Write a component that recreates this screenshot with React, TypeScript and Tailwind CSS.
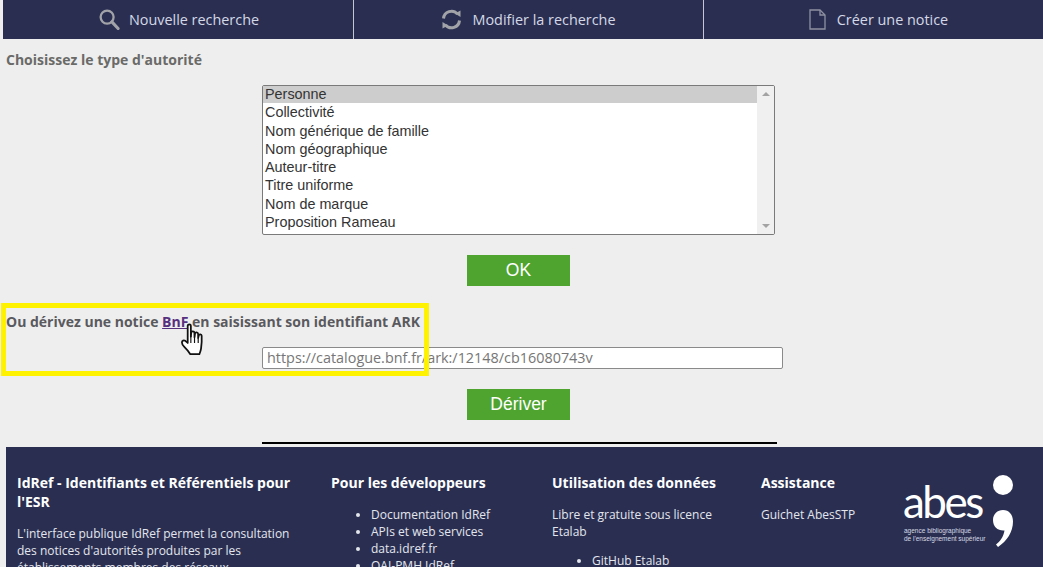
const types = [
  'Personne',
  'Collectivité',
  'Nom générique de famille',
  'Nom géographique',
  'Auteur-titre',
  'Titre uniforme',
  'Nom de marque',
  'Proposition Rameau',
];

function SearchIcon() {
  return (
    <svg width="21" height="21" viewBox="0 0 22 22" fill="none" stroke="#a2a3a8">
      <circle cx="8.500" cy="8.500" r="6.800" strokeWidth="2.400" />
      <path d="M13.500 13.500L20 20.500" strokeWidth="3.200" strokeLinecap="round" />
    </svg>
  );
}

function RefreshIcon() {
  return (
    <svg width="21" height="21" viewBox="0 0 21 21" fill="none" stroke="#a2a3a8" strokeWidth="3">
      <path d="M2.500 9.500A8 8 0 0 1 16.500 5" />
      <path d="M18.500 11.500A8 8 0 0 1 4.500 16" />
      <path d="M14 4.500L19.500 1.500L19.500 8Z" fill="#a2a3a8" stroke="none" />
      <path d="M7 16.500L1.500 19.500L1.500 13Z" fill="#a2a3a8" stroke="none" />
    </svg>
  );
}

function FileIcon() {
  return (
    <svg width="17" height="21" viewBox="0 0 17 21" fill="none" stroke="#8f91a0" strokeWidth="1.300">
      <path d="M1 1h10l5 5v14H1z" />
      <path d="M11 1v5h5" />
    </svg>
  );
}

function HandCursor() {
  return (
    <svg width="28" height="42" viewBox="0 0 26 40" className="absolute left-[180px] top-[323px]">
      <path
        d="M7 2.500c0-1.600 3-1.600 3 0V13l.4-4c.2-1.500 2.900-1.400 3 .2l.1 4.300.5-3.600c.2-1.500 2.800-1.300 2.900.3l.1 4 .6-2.600c.4-1.300 2.600-1 2.700.5.2 4-.1 9-.6 12.400-.4 2.500-1 3.700-1.600 5.200H9.500C8.500 28 6.500 25.500 4 23c-1.500-1.500-2.500-3-2.500-4.500 0-1.700 1.800-2.500 3.200-1.500L7 19V2.500z"
        fill="#fff"
        stroke="#111"
        strokeWidth="1.700"
        strokeLinejoin="round"
      />
      <path d="M10 12v7M13.500 13v6M17 14v5" stroke="#111" strokeWidth="1.100" fill="none" />
    </svg>
  );
}

function Logo() {
  return (
    <div className="relative w-[115px] h-[78px] text-white">
      <span className="absolute left-0 top-[-2px] text-[44px] leading-[60px] tracking-[-2.500px] font-['Lato',sans-serif]">
        abes
      </span>
      <div className="absolute left-[1px] top-[54px] text-[6.500px] leading-[8px] font-['Liberation_Sans',sans-serif] text-[#d8dae4]">
        agence bibliographique
        <br />
        de l'enseignement supérieur
      </div>
      <svg width="24" height="76" viewBox="0 0 24 76" className="absolute left-[88px] top-[1px]" fill="#fff">
        <circle cx="12" cy="11" r="10" />
        <path d="M2 46c0-6 4.500-10 10-10 6 0 10 4.500 10 11.500C22 58 16 67 7 73l-2-2.500c4-3 7.500-7.500 8.500-14C7 57 2 53 2 46z" />
      </svg>
    </div>
  );
}

export default function App() {
  return (
    <div className="relative w-[1043px] h-[567px] overflow-hidden bg-[#eeeeee] font-['Open_Sans',sans-serif]">
      {/* Top nav */}
      <nav className="ml-[3px] h-[39px] bg-[#2a2f52] flex text-[14.400px] text-[#d5d8e6]">
        <div className="w-[351px] flex items-center justify-center gap-[9px] border-r border-[#c5c7d0] pl-[2px]">
          <SearchIcon />
          <span>Nouvelle recherche</span>
        </div>
        <div className="w-[350px] flex items-center justify-center gap-[10px] border-r border-[#c5c7d0]">
          <RefreshIcon />
          <span>Modifier la recherche</span>
        </div>
        <div className="flex-1 flex items-center justify-center gap-[11px] pl-[10px]">
          <FileIcon />
          <span>Créer une notice</span>
        </div>
      </nav>

      <main className="pl-[6px]">
        <h2 className="pt-[12px] text-[14px] leading-[18px] font-bold text-[#6a6a68]">
          Choisissez le type d'autorité
        </h2>

        {/* Authority type list */}
        <div className="ml-[256px] mt-[16px] w-[513px] h-[150px] flex bg-white border border-[#7a7a7a] rounded-[2px] overflow-hidden font-['Liberation_Sans',sans-serif] text-[14.400px] leading-[18.250px] text-[#333]">
          <ul className="flex-1 -mt-px">
            {types.map((t, i) => (
              <li key={t} className={i === 0 ? 'pl-[2px] bg-[#cdcdcd]' : 'pl-[2px]'}>
                {t}
              </li>
            ))}
          </ul>
          <div className="w-[17px] bg-[#f0f0f0] flex flex-col items-center justify-between py-[6px]">
            <div className="w-0 h-0 border-x-[4px] border-x-transparent border-b-[4px] border-b-[#a3a3a3]" />
            <div className="w-0 h-0 border-x-[4px] border-x-transparent border-t-[4px] border-t-[#a3a3a3]" />
          </div>
        </div>

        <button className="block ml-[461px] mt-[20px] w-[103px] h-[31px] bg-[#4ea42f] text-white text-[17.500px] font-['Liberation_Sans',sans-serif]">
          OK
        </button>

        <p className="mt-[27px] text-[14px] leading-[18px] font-bold text-[#5a5a5e]">
          Ou dérivez une notice{' '}
          <span className="underline text-[#57307f]">BnF</span> en saisissant son identifiant ARK
        </p>

        <div className="ml-[256px] mt-[16px] w-[521px] h-[22px] bg-white border border-[#8a8a8a] rounded-[2px] pl-[4px] text-[14.400px] leading-[20px] text-[#767676]">
          https://catalogue.bnf.fr/ark:/12148/cb16080743v
        </div>

        <button className="block ml-[461px] mt-[20px] w-[103px] h-[31px] bg-[#4ea42f] text-white text-[17.500px] font-['Liberation_Sans',sans-serif]">
          Dériver
        </button>

        <div className="ml-[256px] mt-[22px] w-[515px] h-[2px] bg-black" />

        {/* Footer */}
        <footer className="mt-[3px] h-[200px] bg-[#2a2f52] text-[#e4e6ee] flex pt-[26px] pl-[11px] text-[12px] leading-[17px]">
          <div className="w-[314px] pr-[34px]">
            <h3 className="text-[14px] leading-[19px] font-bold text-white">
              IdRef - Identifiants et Référentiels pour l'ESR
            </h3>
            <p className="mt-[14px]">
              L'interface publique IdRef permet la consultation des notices d'autorités produites par les
              établissements membres des réseaux
            </p>
          </div>
          <div className="w-[221px]">
            <h3 className="text-[14px] leading-[19px] font-bold text-white">Pour les développeurs</h3>
            <ul className="mt-[14px] pl-[40px] list-disc">
              <li>Documentation IdRef</li>
              <li>APIs et web services</li>
              <li>data.idref.fr</li>
              <li>OAI-PMH IdRef</li>
            </ul>
          </div>
          <div className="w-[209px]">
            <h3 className="text-[14px] leading-[19px] font-bold text-white">Utilisation des données</h3>
            <p className="mt-[14px] pr-[30px]">Libre et gratuite sous licence Etalab</p>
            <ul className="mt-[12px] pl-[40px] list-disc">
              <li>GitHub Etalab</li>
            </ul>
          </div>
          <div className="w-[142px]">
            <h3 className="text-[14px] leading-[19px] font-bold text-white">Assistance</h3>
            <p className="mt-[14px]">Guichet AbesSTP</p>
          </div>
          <Logo />
        </footer>
      </main>

      {/* Annotation drawn over the page */}
      <div className="absolute left-[1px] top-[303px] w-[428px] h-[73px] border-[5px] border-[#fff200] pointer-events-none" />
      <HandCursor />
    </div>
  );
}
